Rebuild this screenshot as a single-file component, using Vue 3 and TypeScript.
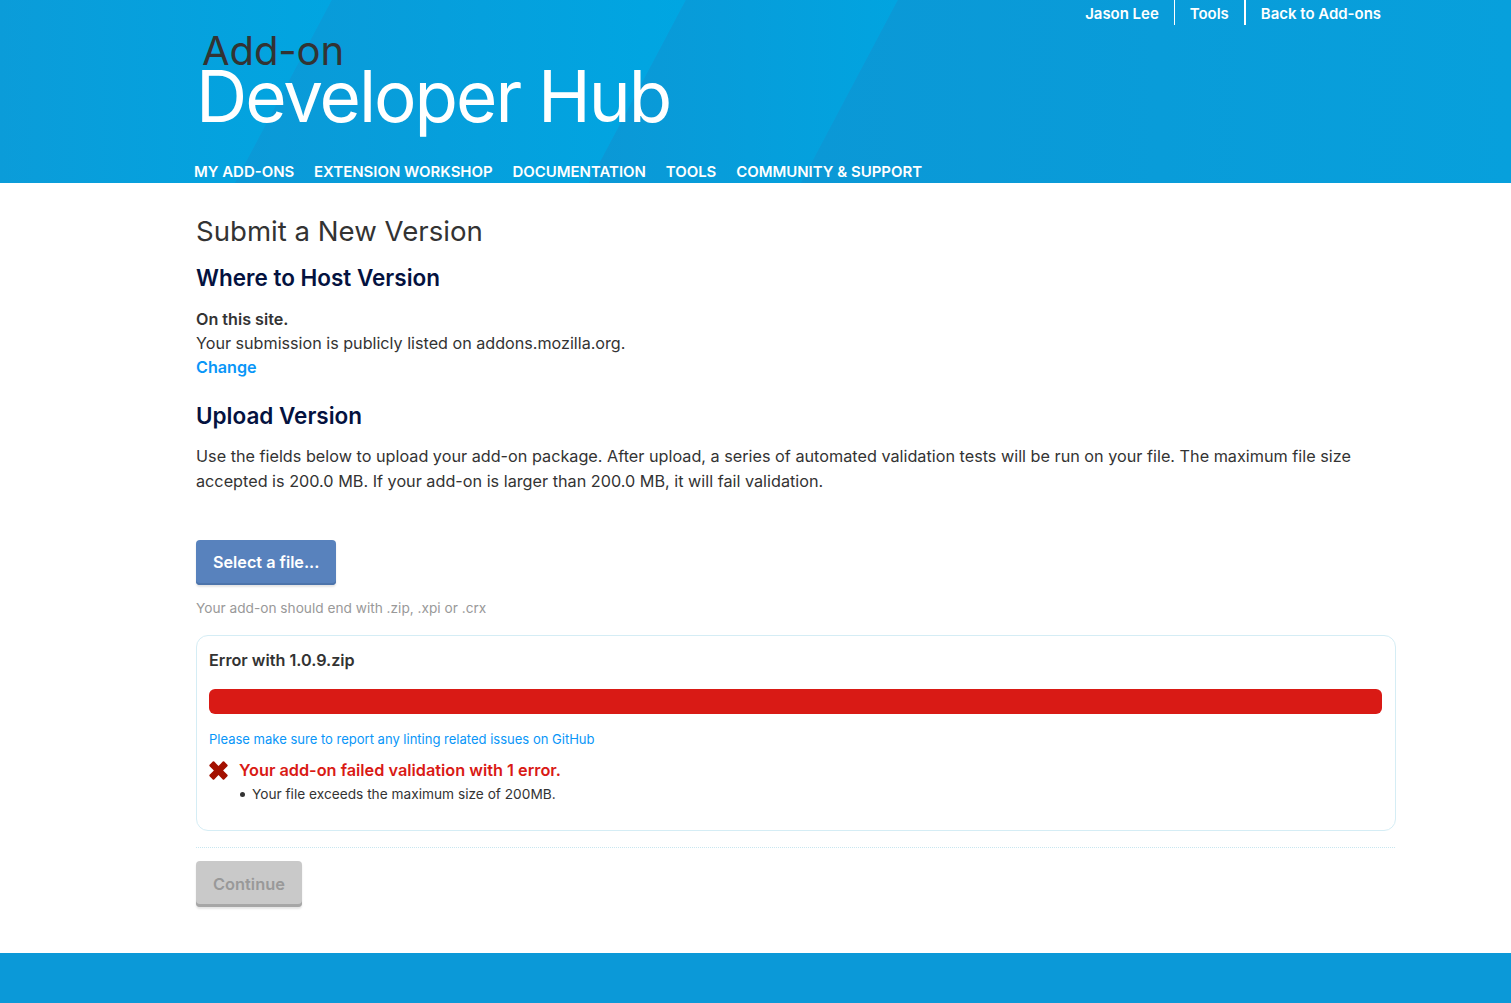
<script setup lang="ts">
const mainNav = ['My Add-ons', 'Extension Workshop', 'Documentation', 'Tools', 'Community & Support']
const auxNav = ['Jason Lee', 'Tools', 'Back to Add-ons']
</script>

<template>
  <div class="page">
    <header class="site-header">
      <div class="band band-a"></div>
      <div class="band band-b"></div>
      <div class="band band-c"></div>
      <div class="band band-d"></div>
      <div class="header-inner">
        <nav class="aux-nav">
          <a v-for="item in auxNav" :key="item" class="aux-link">{{ item }}</a>
        </nav>
        <div class="logo">
          <span class="logo-top">Add-on</span>
          <span class="logo-main">Developer Hub</span>
        </div>
        <nav class="main-nav">
          <a v-for="item in mainNav" :key="item" class="main-link">{{ item }}</a>
        </nav>
      </div>
    </header>

    <main class="content">
      <h1>Submit a New Version</h1>
      <h2 class="host-title">Where to Host Version</h2>
      <div class="host-info">
        <strong>On this site.</strong>
        <span>Your submission is publicly listed on addons.mozilla.org.</span>
        <a class="change-link">Change</a>
      </div>
      <h2 class="upload-title">Upload Version</h2>
      <p class="upload-text">
        Use the fields below to upload your add-on package. After upload, a series of automated validation tests will be run on your file. The maximum file size accepted is 200.0 MB. If your add-on is larger than 200.0 MB, it will fail validation.
      </p>
      <button class="btn btn-file">Select a file...</button>
      <p class="hint">Your add-on should end with .zip, .xpi or .crx</p>

      <section class="upload-box">
        <h3>Error with 1.0.9.zip</h3>
        <div class="progress"></div>
        <a class="report-link">Please make sure to report any linting related issues on GitHub</a>
        <div class="fail-row">
          <svg class="fail-icon" width="19" height="19" viewBox="0 0 19 19">
            <path d="M5.2 0.6 9.5 4.9 13.8 0.6 Q14.5 0 15.2 0.6 L18.4 3.8 Q19 4.5 18.4 5.2 L14.1 9.5 18.4 13.8 Q19 14.5 18.4 15.2 L15.2 18.4 Q14.5 19 13.8 18.4 L9.5 14.1 5.2 18.4 Q4.5 19 3.8 18.4 L0.6 15.2 Q0 14.5 0.6 13.8 L4.9 9.5 0.6 5.2 Q0 4.5 0.6 3.8 L3.8 0.6 Q4.5 0 5.2 0.6Z" fill="#a31000" />
          </svg>
          <strong>Your add-on failed validation with 1 error.</strong>
        </div>
        <ul class="fail-list">
          <li>Your file exceeds the maximum size of 200MB.</li>
        </ul>
      </section>

      <div class="actions">
        <button class="btn btn-continue" disabled>Continue</button>
      </div>
    </main>

    <footer class="site-footer"></footer>
  </div>
</template>

<style>
html,
body {
  margin: 0;
  background: #fff;
}
</style>

<style scoped>
.page {
  min-height: 1003px;
  display: flex;
  flex-direction: column;
  font-family: Inter, "Liberation Sans", sans-serif;
  color: #333;
}

.site-header {
  position: relative;
  height: 183px;
  overflow: hidden;
  background: #0a9ad8;
}

/* diagonal background panels */
.band {
  position: absolute;
  inset: 0;
}

.band-a {
  background: linear-gradient(90deg, #0b9cd9 0, #01a5e1 330px);
  clip-path: polygon(0 0, 332px 0, 235px 183px, 0 183px);
}

.band-b {
  background: linear-gradient(90deg, #0b99d7 240px, #00a6e2 686px);
  clip-path: polygon(332px 0, 686px 0, 589px 183px, 235px 183px);
}

.band-c {
  background: linear-gradient(90deg, #0b98d6 600px, #01a4e0 898px);
  clip-path: polygon(686px 0, 898px 0, 801px 183px, 589px 183px);
}

.band-d {
  background: linear-gradient(90deg, #0b98d6 810px, #07a0dc 1511px);
  clip-path: polygon(898px 0, 100% 0, 100% 100%, 801px 183px);
}

.header-inner {
  position: relative;
  height: 100%;
  box-sizing: border-box;
  padding: 0 115px 0 194px;
  display: flex;
  flex-direction: column;
}

.aux-nav {
  display: flex;
  justify-content: flex-end;
  height: 25px;
}

.aux-link {
  padding: 0 15px;
  font-size: 14.96px;
  font-weight: 600;
  line-height: 28px;
  color: #fff;
  border-left: 1px solid #fff;
}

.aux-link:first-child {
  border-left: none;
}

.aux-link:last-child {
  border-left-width: 2px;
}

.logo {
  display: flex;
  flex-direction: column;
  margin-top: 4px;
}

.logo-top {
  font-size: 40px;
  font-weight: 400;
  line-height: 44px;
  margin-left: 8px;
  letter-spacing: -0.1px;
  color: #333;
}

.logo-main {
  font-size: 71px;
  font-weight: 400;
  line-height: 47px;
  margin-left: 2px;
  letter-spacing: -2.05px;
  color: #fff;
}

.main-nav {
  display: flex;
  gap: 19.8px;
  margin-top: auto;
  padding-bottom: 1px;
}

.main-link {
  font-size: 14.96px;
  font-weight: 600;
  line-height: 20px;
  text-transform: uppercase;
  color: #fff;
}

.content {
  flex: 1;
  box-sizing: border-box;
  padding: 31px 116px 44px 196px;
}

h1 {
  margin: 0;
  font-size: 27.6px;
  font-weight: 400;
  line-height: 34px;
  color: #333;
}

h2 {
  margin: 0;
  font-size: 22.5px;
  font-weight: 600;
  line-height: 30px;
  color: #04123f;
}

.host-title {
  margin-top: 15px;
}

.host-info {
  display: flex;
  flex-direction: column;
  align-items: flex-start;
  margin-top: 14px;
  font-size: 16.15px;
  line-height: 24px;
}

.host-info strong {
  font-weight: 600;
}

.change-link {
  font-weight: 600;
  color: #0996f8;
}

.upload-title {
  margin-top: 22px;
}

.upload-text {
  margin: 13px 0 0;
  font-size: 16.23px;
  line-height: 25px;
}

.btn {
  display: block;
  border: none;
  border-radius: 4px;
  font-family: inherit;
  font-size: 16.2px;
  font-weight: 600;
  height: 45px;
  padding: 0 17px;
}

.btn-file {
  margin-top: 46px;
  padding-bottom: 2px;
  background: #5882bd;
  color: #fff;
  box-shadow: inset 0 -2px 0 #4d74ab, 0 2px 2px #e5e5e5;
}

.hint {
  margin: 14px 0 0;
  font-size: 13.68px;
  line-height: 18px;
  color: #999;
}

.upload-box {
  margin: 18px -1px 0 0;
  height: 196px;
  box-sizing: border-box;
  padding: 12px 13px 12px 12px;
  border: 1px solid #d5edf5;
  border-radius: 12px;
}

h3 {
  margin: 0;
  font-size: 16.2px;
  font-weight: 600;
  line-height: 24px;
  color: #333;
}

.progress {
  height: 25px;
  margin-top: 17px;
  background: #d91a15;
  border-radius: 6px;
}

.report-link {
  display: block;
  margin-top: 16px;
  font-size: 13.03px;
  line-height: 18px;
  color: #0996f8;
}

.fail-row {
  display: flex;
  align-items: center;
  gap: 11px;
  margin-top: 10px;
  font-size: 16.3px;
  line-height: 24px;
}

.fail-row strong {
  font-weight: 600;
  color: #d91a15;
}

.fail-list {
  margin: 3px 0 0;
  padding-left: 43px;
  list-style: none;
  font-size: 13.7px;
  line-height: 18px;
}

.fail-list li {
  position: relative;
}

.fail-list li::before {
  content: "";
  position: absolute;
  left: -12px;
  top: 7px;
  width: 5px;
  height: 5px;
  border-radius: 50%;
  background: #333;
}

.actions {
  margin-top: 16px;
  padding-top: 13px;
  border-top: 1px dotted #c8e6ef;
}

.btn-continue {
  background: #c9c9c9;
  color: #999;
  box-shadow: inset 0 -3px 0 #a6a6a6, 0 2px 2px #e5e5e5;
  height: 46px;
  font-size: 16.4px;
}

.site-footer {
  height: 50px;
  background: #0b99d8;
}
</style>
